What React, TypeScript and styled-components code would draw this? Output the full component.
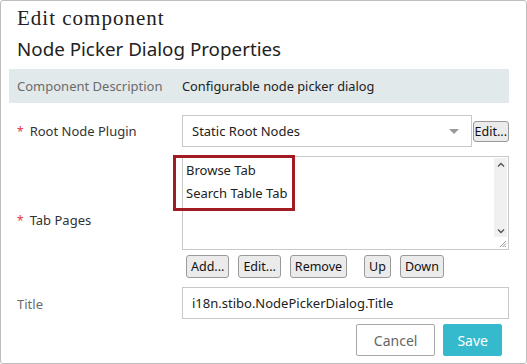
import React from 'react';
import styled, { createGlobalStyle } from 'styled-components';

const GlobalStyle = createGlobalStyle`
  html, body { margin: 0; padding: 0; background: #fff; }
  body { font-family: 'Noto Sans', 'Open Sans', sans-serif; }
  * { box-sizing: border-box; }
`;

const Dialog = styled.div`
  width: 527px;
  height: 364px;
  border: 1px solid #bdbdbd;
  border-radius: 3px;
  padding: 4px 0 0 0;
  color: #222;
`;

const Heading = styled.h1`
  margin: 0 0 0 16px;
  font-family: 'Liberation Serif', 'DejaVu Serif', serif;
  font-weight: normal;
  font-size: 21px;
  letter-spacing: 1px;
  line-height: 26px;
  color: #222;
`;

const SubHeading = styled.h2`
  margin: 6px 0 0 16px;
  font-weight: normal;
  font-size: 18.8px;
  line-height: 24px;
  color: #222;
`;

const DescRow = styled.div`
  display: flex;
  align-items: center;
  height: 34px;
  margin: 8px 17px 0 8px;
  padding-left: 8px;
  background: #e1e9eb;
  font-size: 13px;
`;

const DescLabel = styled.span`
  width: 165px;
  color: #6b6b6b;
`;

const DescValue = styled.span`
  color: #222;
  font-size: 12.8px;
`;

const Form = styled.div`
  display: grid;
  grid-template-columns: 165px 327px;
  margin: 12px 0 0 16px;
  row-gap: 9px;
  font-size: 13px;
`;

const Label = styled.div<{ $muted?: boolean; $shift?: number }>`
  display: flex;
  align-items: center;
  padding-top: ${(p) => p.$shift ?? 0}px;
  color: ${(p) => (p.$muted ? '#6b6b6b' : '#333')};
`;

const Star = styled.span`
  color: #e2383c;
  margin-right: 6px;
  font-size: 12px;
`;

const Field = styled.div`
  display: flex;
  flex-direction: column;
  gap: 5px;
`;

const SelectRow = styled.div`
  display: flex;
  align-items: center;
  gap: 1px;
`;

const Select = styled.div`
  position: relative;
  flex: 1;
  height: 32px;
  border: 1px solid #c8c8c8;
  display: flex;
  align-items: center;
  padding-left: 9px;
  font-size: 13px;
`;

const Caret = styled.span`
  position: absolute;
  right: 12px;
  top: 13px;
  width: 0;
  height: 0;
  border-left: 5px solid transparent;
  border-right: 5px solid transparent;
  border-top: 5px solid #9a9a9a;
`;

const SmallButton = styled.button<{ $tight?: boolean; $gapBefore?: number }>`
  height: ${(p) => (p.$tight ? 21 : 23)}px;
  padding: 0 ${(p) => (p.$tight ? 1 : 4)}px;
  margin-left: ${(p) => p.$gapBefore ?? 0}px;
  font: inherit;
  font-size: 12.5px;
  color: #111;
  background: #ebebeb;
  border: 1px solid #9a9a9a;
  border-radius: 3px;
`;

const ListBox = styled.div`
  position: relative;
  display: flex;
  height: 94px;
  border: 1px solid #c8c8c8;
`;

const ListItems = styled.div`
  flex: 1;
  padding: 2px 0 0 3px;
  line-height: 23px;
  font-size: 13px;
`;

const Track = styled.div`
  width: 13px;
  margin: 1px 1px 12px 0;
  background: #f0f0f0;
  display: flex;
  flex-direction: column;
  justify-content: space-between;
  align-items: center;
  padding: 4px 0 3px;
`;

const Grip = styled.svg`
  position: absolute;
  right: 1px;
  bottom: 1px;
`;

const Highlight = styled.div`
  position: absolute;
  left: -10px;
  top: -2px;
  width: 122px;
  height: 56px;
  border: 3px solid #a31b22;
`;

const ButtonRow = styled.div`
  display: flex;
  gap: 9px;
  padding-left: 4px;
`;

const Input = styled.div`
  height: 32px;
  border: 1px solid #c8c8c8;
  display: flex;
  align-items: center;
  padding-left: 9px;
  font-size: 13px;
`;

const Footer = styled.div`
  display: flex;
  justify-content: flex-end;
  gap: 8px;
  margin: 5px 24px 0 0;
`;

const DialogButton = styled.button<{ $primary?: boolean }>`
  height: 32px;
  padding: 0 ${(p) => (p.$primary ? 13 : 17)}px;
  font: inherit;
  font-size: 14px;
  border-radius: 2px;
  border: 1px solid ${(p) => (p.$primary ? '#35b9cc' : '#a8a8a8')};
  background: ${(p) => (p.$primary ? '#35b9cc' : '#fff')};
  color: ${(p) => (p.$primary ? '#fff' : '#666')};
`;

const Chevron = ({ up }: { up?: boolean }) => (
  <svg width="8" height="5" viewBox="0 0 8 5">
    <path
      d={up ? 'M1 4.5 L4 1.5 L7 4.5' : 'M1 0.5 L4 3.5 L7 0.5'}
      fill="none"
      stroke="#505050"
      strokeWidth="1.3"
    />
  </svg>
);

export default function App() {
  return (
    <>
      <GlobalStyle />
      <Dialog>
        <Heading>Edit component</Heading>
        <SubHeading>Node Picker Dialog Properties</SubHeading>
        <DescRow>
          <DescLabel>Component Description</DescLabel>
          <DescValue>Configurable node picker dialog</DescValue>
        </DescRow>
        <Form>
          <Label>
            <Star>*</Star>Root Node Plugin
          </Label>
          <SelectRow>
            <Select>
              Static Root Nodes
              <Caret />
            </Select>
            <SmallButton $tight>Edit...</SmallButton>
          </SelectRow>

          <Label $shift={6}>
            <Star>*</Star>Tab Pages
          </Label>
          <Field>
            <ListBox>
              <ListItems>
                <div>Browse Tab</div>
                <div>Search Table Tab</div>
              </ListItems>
              <Track>
                <Chevron up />
                <Chevron />
              </Track>
              <Grip width="10" height="10" viewBox="0 0 10 10">
                <path d="M9 3 L3 9 M9 5.5 L5.5 9 M9 8 L8 9" stroke="#999" strokeWidth="1" />
              </Grip>
              <Highlight />
            </ListBox>
            <ButtonRow>
              <SmallButton>Add...</SmallButton>
              <SmallButton>Edit...</SmallButton>
              <SmallButton>Remove</SmallButton>
              <SmallButton $gapBefore={8}>Up</SmallButton>
              <SmallButton>Down</SmallButton>
            </ButtonRow>
          </Field>

          <Label $muted $shift={2}>Title</Label>
          <Input>i18n.stibo.NodePickerDialog.Title</Input>
        </Form>
        <Footer>
          <DialogButton>Cancel</DialogButton>
          <DialogButton $primary>Save</DialogButton>
        </Footer>
      </Dialog>
    </>
  );
}
